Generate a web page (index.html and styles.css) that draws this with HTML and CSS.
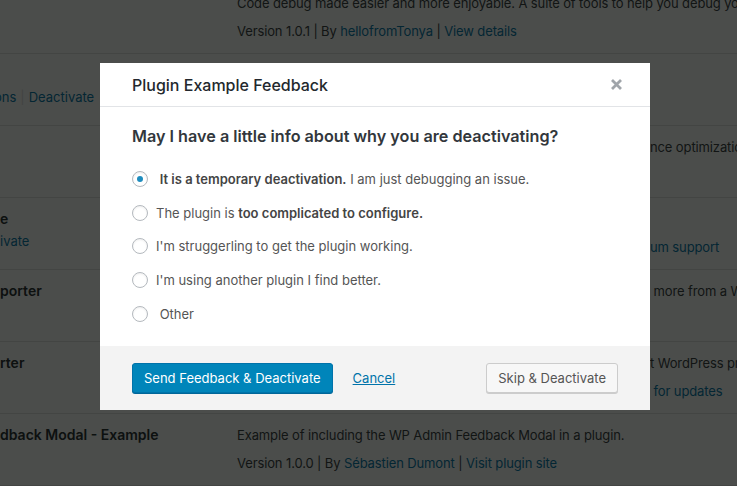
FILE: index.html
```html
<!DOCTYPE html>
<html lang="en">
<head>
<meta charset="utf-8">
<title>Plugins</title>
<link rel="stylesheet" href="styles.css">
</head>
<body>
<main class="plugins">
  <div class="plugin">
    <div class="name-col"></div>
    <div class="desc-col">
      <div class="line">Code debug made easier and more enjoyable. A suite of tools to help you debug your code.</div>
      <div class="line meta">Version 1.0.1 | By <a href="#">hellofromTonya</a> | <a href="#">View details</a></div>
    </div>
  </div>
  <div class="plugin">
    <div class="name-col">
      <div class="line">&nbsp;</div>
      <div class="line actions actions--cropped"><a href="#">ons</a><span class="sep">|</span><a href="#">Deactivate</a></div>
    </div>
    <div class="desc-col">
      <div class="line">&nbsp;</div>
    </div>
  </div>
  <div class="plugin">
    <div class="name-col"></div>
    <div class="desc-col behind">
      <div class="line">nce optimization for your WordPress site.</div>
    </div>
  </div>
  <div class="plugin">
    <div class="name-col">
      <div class="line"><strong class="plugin-title">e</strong></div>
      <div class="line actions"><a href="#">ivate</a></div>
    </div>
    <div class="desc-col behind">
      <div class="line">&nbsp;</div>
      <div class="line meta"><a href="#">um support</a></div>
    </div>
  </div>
  <div class="plugin">
    <div class="name-col">
      <div class="line"><strong class="plugin-title">porter</strong></div>
    </div>
    <div class="desc-col behind">
      <div class="line">&nbsp;more from a WordPress site.</div>
    </div>
  </div>
  <div class="plugin">
    <div class="name-col">
      <div class="line"><strong class="plugin-title">rter</strong></div>
    </div>
    <div class="desc-col behind">
      <div class="line">t WordPress products.</div>
      <div class="line meta">&nbsp;<a href="#">for updates</a></div>
    </div>
  </div>
  <div class="plugin">
    <div class="name-col">
      <div class="line"><strong class="plugin-title">dback Modal - Example</strong></div>
    </div>
    <div class="desc-col">
      <div class="line">Example of including the WP Admin Feedback Modal in a plugin.</div>
      <div class="line meta">Version 1.0.0 | By <a href="#">Sébastien Dumont</a> | <a href="#">Visit plugin site</a></div>
    </div>
  </div>
</main>

<div class="overlay">
  <div class="modal" role="dialog" aria-labelledby="modal-title">
    <header class="modal-header">
      <h2 class="modal-title" id="modal-title">Plugin Example Feedback</h2>
      <button class="modal-close" aria-label="Close">
        <svg width="13" height="13" viewBox="0 0 13 13" aria-hidden="true"><path d="M2 2L11 11M11 2L2 11" stroke="#a0a5aa" stroke-width="2.8" fill="none"/></svg>
      </button>
    </header>
    <div class="modal-body">
      <h3 class="question">May I have a little info about why you are deactivating?</h3>
      <label class="option"><input type="radio" name="reason" checked><span>&nbsp;<b>It is a temporary deactivation.</b> I am just debugging an issue.</span></label>
      <label class="option"><input type="radio" name="reason"><span>The plugin is <b>too complicated to configure.</b></span></label>
      <label class="option"><input type="radio" name="reason"><span>I'm struggerling to get the plugin working.</span></label>
      <label class="option"><input type="radio" name="reason"><span>I'm using another plugin I find better.</span></label>
      <label class="option"><input type="radio" name="reason"><span>&nbsp;Other</span></label>
    </div>
    <footer class="modal-footer">
      <button class="btn btn-primary">Send Feedback &amp; Deactivate</button>
      <a href="#" class="link-cancel">Cancel</a>
      <button class="btn btn-secondary">Skip &amp; Deactivate</button>
    </footer>
  </div>
</div>
</body>
</html>
```

FILE: styles.css
```css
html, body {
  margin: 0;
  height: 100%;
}

body {
  font-family: Inter, "Noto Sans", "Liberation Sans", sans-serif;
  font-size: 13px;
  color: #32373c;
  background: #fff;
  overflow: hidden;
}

a {
  color: #0073aa;
  text-decoration: none;
}

/* background plugin list */
.plugins {
  margin-top: -18px;
}

.plugin {
  display: grid;
  grid-template-columns: 237px 1fr;
  height: 72px;
  box-sizing: border-box;
  padding-top: 12px;
  border-bottom: 1px solid #e1e1e1;
  white-space: nowrap;
}

.line {
  height: 18px;
  line-height: 18px;
}

.desc-col .line {
  letter-spacing: -0.12px;
}

.name-col .actions {
  margin-top: 4px;
}

.name-col .actions--cropped {
  margin-left: -6px;
}

.desc-col .meta {
  margin-top: 10px;
}

.desc-col.behind {
  padding-left: 413px;
}

.plugin-title {
  font-size: 14px;
  font-weight: 600;
  color: #23282d;
}

.sep {
  color: #ddd;
  margin: 0 4px;
}

/* modal */
.overlay {
  position: fixed;
  inset: 0;
  background: rgba(5, 8, 6, 0.72);
  padding: 63px 0 0 100px;
}

.modal {
  width: 550px;
  background: #fff;
}

.modal-header {
  height: 43px;
  border-bottom: 1px solid #e2e4e7;
  display: flex;
  align-items: center;
  justify-content: space-between;
  padding: 0 27px 0 32px;
}

.modal-title {
  margin: 0;
  font-size: 16px;
  font-weight: 500;
  color: #23282d;
}

.modal-close {
  border: 0;
  background: none;
  padding: 0;
  width: 13px;
  height: 13px;
  display: flex;
}

.modal-body {
  padding: 17px 32px 15px;
}

.question {
  margin: 0 0 14px;
  font-size: 16.2px;
  line-height: 24px;
  font-weight: 600;
  color: #32373c;
}

.option {
  display: flex;
  align-items: center;
  height: 33.75px;
  font-size: 13px;
  color: #555;
}

.option b {
  font-weight: 600;
  color: #444;
}

.option input {
  appearance: none;
  -webkit-appearance: none;
  width: 16px;
  height: 16px;
  margin: 0 8px 0 0;
  border: 1px solid #b4b9be;
  border-radius: 50%;
  background: #fff;
  box-shadow: inset 0 1px 2px rgba(0, 0, 0, 0.07);
  display: grid;
  place-items: center;
  box-sizing: border-box;
}

.option input:checked::before {
  content: "";
  width: 6px;
  height: 6px;
  border-radius: 50%;
  background: #1e8cbe;
}

.modal-footer {
  height: 64px;
  box-sizing: border-box;
  background: #f3f3f3;
  padding: 0 32px;
  display: flex;
  align-items: center;
}

.btn {
  height: 30px;
  box-sizing: border-box;
  padding: 0 11px;
  border-radius: 3px;
  font-family: inherit;
  font-size: 13px;
}

.btn-primary {
  background: #0085ba;
  border: 1px solid #0073aa;
  box-shadow: 0 1px 0 #006799;
  color: #fff;
}

.link-cancel {
  margin-left: 20px;
  font-size: 13px;
  text-decoration: underline;
}

.btn-secondary {
  margin-left: auto;
  background: #f7f7f7;
  border: 1px solid #ccc;
  box-shadow: 0 1px 0 #ccc;
  color: #555;
}
```
